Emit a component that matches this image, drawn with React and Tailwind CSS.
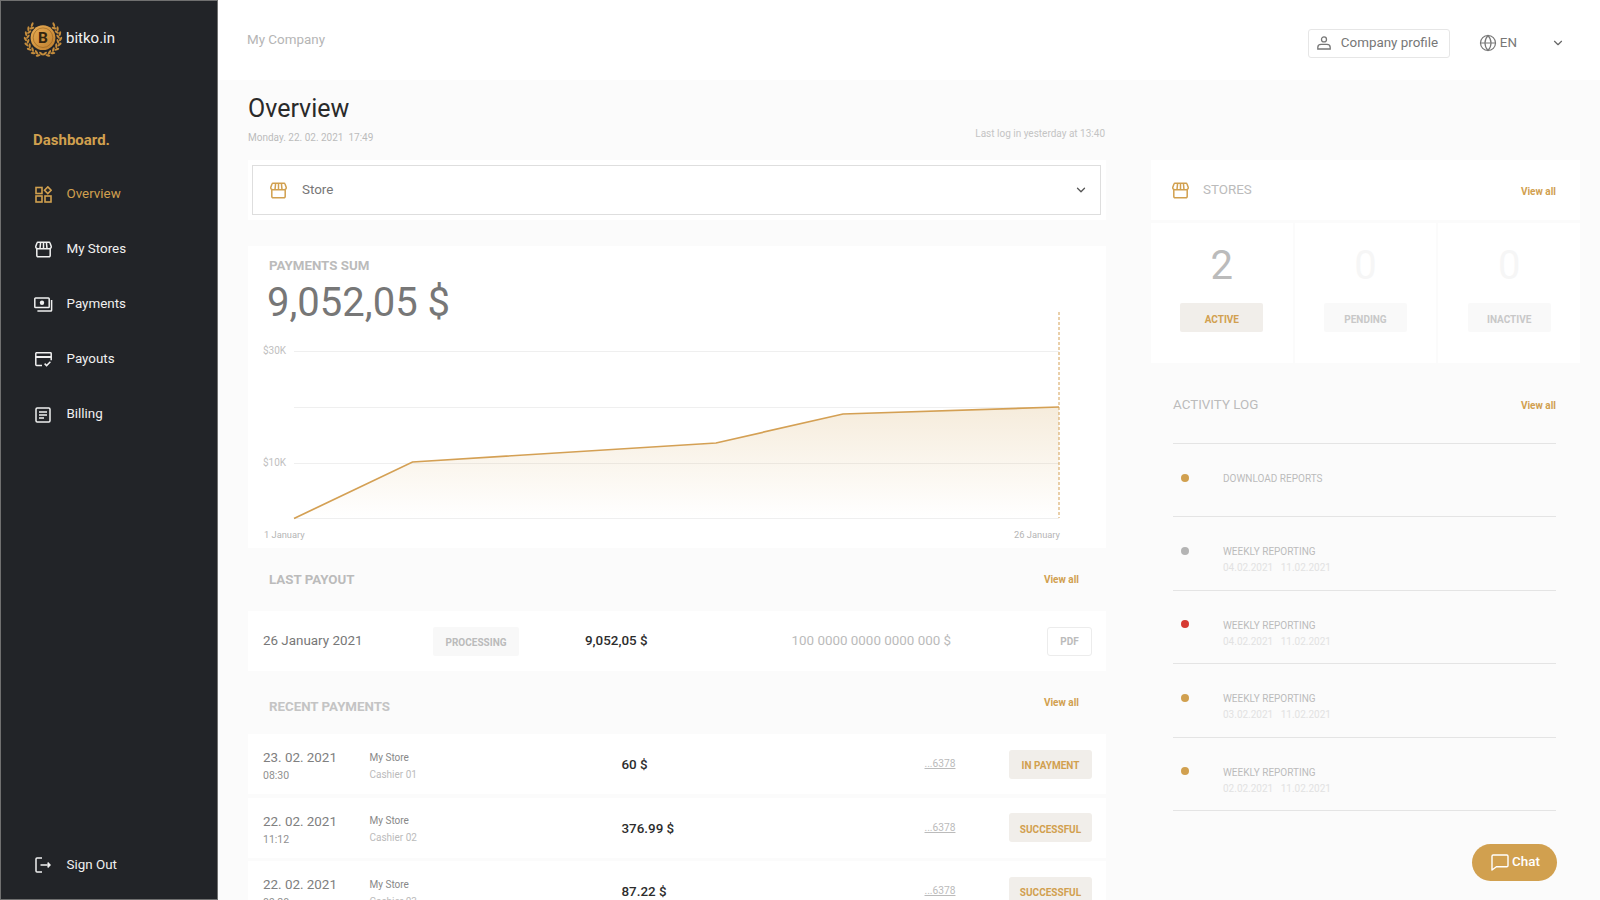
import React from 'react';
import { ChevronDown, Globe } from 'lucide-react';

const StoreIcon = ({ className }) => (
  <svg viewBox="0 0 17 17" fill="none" stroke="currentColor" strokeWidth="1.5" strokeLinejoin="round" className={className}>
    <path d="M3 1.2h11a1 1 0 0 1 1 .7l1.2 3.4a2 2 0 0 1-2 2.4H2.8a2 2 0 0 1-2-2.4L2 1.9a1 1 0 0 1 1-.7Z" />
    <path d="M5.6 1.4 5 7.6M8.5 1.4v6.2M11.4 1.4l.6 6.2" />
    <path d="M1.8 7.7v6.9a1.2 1.2 0 0 0 1.2 1.2h11a1.2 1.2 0 0 0 1.2-1.2V7.7" />
  </svg>
);

const OverviewIcon = ({ className }) => (
  <svg viewBox="0 0 17 17" fill="none" stroke="currentColor" strokeWidth="1.6" className={className}>
    <rect x="1" y="1.5" width="6" height="6" />
    <rect x="1" y="10" width="6" height="6" />
    <rect x="10" y="10" width="6" height="6" />
    <path d="m12.8.9 3.3 3.3-3.3 3.3-3.3-3.3Z" />
  </svg>
);

const PaymentsIcon = ({ className }) => (
  <svg viewBox="0 0 19 15" fill="none" stroke="currentColor" strokeWidth="1.5" className={className}>
    <rect x="0.8" y="1" width="14.4" height="9.6" rx="0.8" />
    <circle cx="8" cy="5.8" r="2.2" fill="currentColor" stroke="none" />
    <path d="M17.6 3v10.2a.8.8 0 0 1-.8.8H3.4" />
  </svg>
);

const PayoutsIcon = ({ className }) => (
  <svg viewBox="0 0 17 15" fill="none" stroke="currentColor" strokeWidth="1.5" className={className}>
    <path d="M7 13.4H1.6a.8.8 0 0 1-.8-.8V1.5a.8.8 0 0 1 .8-.8h13.8a.8.8 0 0 1 .8.8v6.8" />
    <path d="M.8 5h15.4" strokeWidth="2" />
    <path d="m9.6 11.6 2 2 3.8-3.8" />
  </svg>
);

const BillingIcon = ({ className }) => (
  <svg viewBox="0 0 16 16" fill="none" stroke="currentColor" strokeWidth="1.5" className={className}>
    <rect x="1" y="1" width="14" height="14" rx="1.2" />
    <path d="M4 5h8M4 8h8M4 11h5" />
  </svg>
);

const SignOutIcon = ({ className }) => (
  <svg viewBox="0 0 16 16" fill="none" stroke="currentColor" strokeWidth="1.5" className={className}>
    <path d="M7 1H2a1 1 0 0 0-1 1v12a1 1 0 0 0 1 1h5" />
    <path d="M5.5 8h9.5M12.6 5.6 15 8l-2.4 2.4" />
  </svg>
);

const UserIcon = ({ className }) => (
  <svg viewBox="0 0 14 14" fill="none" stroke="currentColor" strokeWidth="1.3" className={className}>
    <circle cx="7" cy="3.4" r="2.5" />
    <path d="M.8 13v-1.6c0-1.8 1.6-3 3.2-3h6c1.6 0 3.2 1.2 3.2 3V13Z" />
  </svg>
);

const ChatIcon = ({ className }) => (
  <svg viewBox="0 0 18 17" fill="none" stroke="currentColor" strokeWidth="1.4" strokeLinejoin="round" className={className}>
    <path d="M2.2 1h13.6a1.2 1.2 0 0 1 1.2 1.2v9.4a1.2 1.2 0 0 1-1.2 1.2H5.4L1 16V2.2A1.2 1.2 0 0 1 2.2 1Z" />
  </svg>
);

// laurel leaves on the left half of the wreath, mirrored for the right half
const outerLeaves = [128, 146, 164, 182, 200, 218, 236, 254];
const innerLeaves = [137, 155, 173, 191, 209, 227, 245, 263];

const Leaf = ({ a, r, tilt }) => {
  const rad = (a * Math.PI) / 180;
  const x = 20 + r * Math.cos(rad);
  const y = 17.5 - r * Math.sin(rad);
  const deg = 180 - a + tilt;
  return (
    <g fill="#c48c3c">
      <ellipse cx={x} cy={y} rx="1.1" ry="2.5" transform={`rotate(${deg} ${x} ${y})`} />
      <ellipse cx={40 - x} cy={y} rx="1.1" ry="2.5" transform={`rotate(${-deg} ${40 - x} ${y})`} />
    </g>
  );
};

const Logo = () => (
  <svg viewBox="0 0 40 36" className="w-[40px] h-[36px]">
    <defs>
      <linearGradient id="gold" x1="0" y1="0" x2="1" y2="1">
        <stop offset="0%" stopColor="#e9ad56" />
        <stop offset="100%" stopColor="#bd7e2c" />
      </linearGradient>
    </defs>
    {outerLeaves.map((a) => (
      <Leaf key={a} a={a} r={17.6} tilt={-30} />
    ))}
    {innerLeaves.map((a) => (
      <Leaf key={a} a={a} r={15.2} tilt={30} />
    ))}
    <circle cx="20" cy="16.7" r="12.4" fill="url(#gold)" />
    <circle cx="20" cy="16.7" r="9.8" fill="none" stroke="#8f5c1c" strokeWidth="0.6" />
    <text x="20" y="22.2" textAnchor="middle" fontSize="15.5" fontWeight="700" fill="#33240f" fontFamily="Roboto, sans-serif">B</text>
  </svg>
);

const navItems = [
  { label: 'Overview', Icon: OverviewIcon, iconClass: 'w-[17px] h-[17px]', active: true },
  { label: 'My Stores', Icon: StoreIcon, iconClass: 'w-[17px] h-[17px]' },
  { label: 'Payments', Icon: PaymentsIcon, iconClass: 'w-[19px] h-[15px]' },
  { label: 'Payouts', Icon: PayoutsIcon, iconClass: 'w-[17px] h-[15px]' },
  { label: 'Billing', Icon: BillingIcon, iconClass: 'w-[16px] h-[16px]' },
];

const Sidebar = () => (
  <aside className="w-[218px] shrink-0 h-full bg-[#222428] border border-[#707070] flex flex-col">
    <div className="flex items-center pl-[22px] pt-[20px] h-[56px]">
      <Logo />
      <span className="ml-[3px] text-[15px] text-[#f2f2f2] leading-none -mt-[1px]">bitko.in</span>
    </div>
    <div className="mt-[73px] pl-[32px] text-[15px] font-bold text-[#d1a04f] leading-5">Dashboard.</div>
    <nav className="mt-[17px]">
      {navItems.map(({ label, Icon, iconClass, active }) => (
        <div key={label} className={`h-[55px] flex items-center text-[13.4px] ${active ? 'text-[#d1a04f]' : 'text-[#f0f0f0]'}`}>
          <span className="w-[65.5px] flex justify-center pl-[19px]">
            <Icon className={iconClass} />
          </span>
          <span>{label}</span>
        </div>
      ))}
    </nav>
    <div className="mt-auto mb-[16px] h-[36px] flex items-center text-[13.4px] text-[#f0f0f0]">
      <span className="w-[65.5px] flex justify-center pl-[19px]">
        <SignOutIcon className="w-[16px] h-[16px]" />
      </span>
      Sign Out
    </div>
  </aside>
);

const Header = () => (
  <header className="h-[80px] bg-white flex items-center pl-[29px] shrink-0">
    <span className="text-[13.4px] text-[#b5b5b5] mt-[1px]">My Company</span>
    <div className="ml-auto flex items-center mt-[6px]">
      <div className="w-[142px] h-[29px] border border-[#e6e6e6] rounded-[3px] flex items-center pl-[8px] text-[13.4px] text-[#777]">
        <UserIcon className="w-[14px] h-[14px]" />
        <span className="ml-[10px]">Company profile</span>
      </div>
      <Globe className="w-[18px] h-[18px] ml-[29px] text-[#777]" strokeWidth={1.6} />
      <span className="ml-[3px] text-[13.4px] text-[#777]">EN</span>
      <ChevronDown className="w-[14px] h-[14px] ml-[34px] mr-[35px] text-[#666]" strokeWidth={2} />
    </div>
  </header>
);

const ViewAll = () => <span className="block text-[10px] font-bold text-[#d1a04f] leading-4">View all</span>;

const Chart = () => (
  <svg width="858" height="236" className="block" fontFamily="Roboto, sans-serif">
    <defs>
      <linearGradient id="area" x1="0" y1="0" x2="0" y2="1">
        <stop offset="0%" stopColor="#d1a04f" stopOpacity="0.2" />
        <stop offset="100%" stopColor="#d1a04f" stopOpacity="0" />
      </linearGradient>
    </defs>
    <path d="M46 39.5H811M46 95.5H811M46 151.5H811M46 206.5H811" stroke="#efefef" strokeWidth="1" />
    <path d="M46 206.5 164.5 150 468 131 595 102 811 95V206.5Z" fill="url(#area)" />
    <path d="M46 206.5 164.5 150 468 131 595 102 811 95" fill="none" stroke="#d4a054" strokeWidth="1.7" />
    <path d="M811 0V206" stroke="#d4a054" strokeWidth="1" strokeDasharray="3 2" />
    <text x="15" y="42" fontSize="10" fill="#c0c0c0">$30K</text>
    <text x="15" y="154" fontSize="10" fill="#c0c0c0">$10K</text>
    <text x="16" y="226" fontSize="9.3" fill="#b5b5b5">1 January</text>
    <text x="812" y="226" fontSize="9.3" fill="#b5b5b5" textAnchor="end">26 January</text>
  </svg>
);

const payments = [
  { date: '23. 02. 2021', time: '08:30', cashier: 'Cashier 01', amount: '60 $', status: 'IN PAYMENT' },
  { date: '22. 02. 2021', time: '11:12', cashier: 'Cashier 02', amount: '376.99 $', status: 'SUCCESSFUL' },
  { date: '22. 02. 2021', time: '09:20', cashier: 'Cashier 03', amount: '87.22 $', status: 'SUCCESSFUL' },
];

const PaymentRow = ({ date, time, cashier, amount, status }) => (
  <div className="h-[60px] shrink-0 bg-white flex items-center pl-[15px] mb-[3.5px]">
    <div className="w-[106.5px] pt-[4px]">
      <div className="text-[13.4px] leading-[17px] text-[#808080]">{date}</div>
      <div className="text-[10.5px] leading-[14px] mt-[3px] text-[#909090]">{time}</div>
    </div>
    <div className="w-[252px] text-[10px] text-[#888] pt-[4px]">
      <div className="leading-[14px]">My Store</div>
      <div className="leading-[14px] mt-[3px] text-[#bbb]">{cashier}</div>
    </div>
    <div className="w-[303px] text-[13.4px] font-medium text-[#2c2c2c] pt-[3px]">{amount}</div>
    <div className="w-[84.5px] text-[10.2px] text-[#bbb] underline">...6378</div>
    <div className="w-[83px] h-[29px] bg-[#f1eeea] rounded-[3px] flex items-center justify-center text-[10px] font-bold text-[#d1a04f] pt-[3px]">{status}</div>
  </div>
);

const MainColumn = () => (
  <div className="w-[858px] shrink-0">
    <div className="flex items-end justify-between h-[80px] pb-[20px] pr-[1px]">
      <div>
        <h1 className="text-[25px] leading-[30px] text-[#2a2a2a] -mt-[2px]">Overview</h1>
        <div className="text-[10px] leading-[14px] mt-[7px] -mb-[5px] text-[#bbb] whitespace-pre">Monday. 22. 02. 2021  17:49</div>
      </div>
      <div className="text-[10px] leading-[14px] text-[#c4c4c4] -mb-[1px]">Last log in yesterday at 13:40</div>
    </div>
    <div className="h-[60px] bg-white pl-[4px] pr-[5px] py-[5px]">
      <div className="h-[50px] border border-[#dedede] flex items-center pl-[17px] pr-[12px] text-[13.4px] text-[#777]">
        <StoreIcon className="w-[17px] h-[17px] text-[#d1a04f]" />
        <span className="ml-[15px]">Store</span>
        <ChevronDown className="w-[14px] h-[14px] ml-auto text-[#555]" strokeWidth={2.2} />
      </div>
    </div>
    <section className="mt-[26px] h-[302px] bg-white">
      <div className="h-[66px] pl-[21px] pt-[11px]">
        <div className="text-[13.3px] font-bold leading-[18px] text-[#bbb]">PAYMENTS SUM</div>
        <div className="text-[40px] leading-[46px] mt-[5px] -ml-[2px] text-[#777]">9,052,05 $</div>
      </div>
      <Chart />
    </section>
    <div className="h-[63px] flex justify-between items-center pl-[21px] pr-[27px]">
      <span className="text-[13.3px] font-bold text-[#bbb]">LAST PAYOUT</span>
      <ViewAll />
    </div>
    <div className="h-[60px] bg-white flex items-center pl-[15px] pr-[14px]">
      <div className="w-[170px] text-[13.4px] text-[#777]">26 January 2021</div>
      <div className="w-[86px] h-[29px] bg-[#f8f8f8] rounded-[2px] flex items-center justify-center text-[10px] font-bold text-[#bbb] pt-[2px]">PROCESSING</div>
      <div className="ml-[66px] w-[206.5px] text-[13.4px] font-medium text-[#2c2c2c]">9,052,05 $</div>
      <div className="text-[13.4px] text-[#bbb]">100 0000 0000 0000 000 $</div>
      <div className="ml-auto w-[45px] h-[29px] border border-[#ececec] rounded-[3px] flex items-center justify-center text-[10px] font-bold text-[#bbb]">PDF</div>
    </div>
    <div className="h-[63px] flex justify-between items-start pt-[26px] pl-[21px] pr-[27px]">
      <span className="text-[13.3px] font-bold leading-[20px] text-[#c4c4c4]">RECENT PAYMENTS</span>
      <span className="-mt-[2px]"><ViewAll /></span>
    </div>
    {payments.map((p) => (
      <PaymentRow key={p.cashier} {...p} />
    ))}
  </div>
);

const stats = [
  { value: '2', label: 'ACTIVE', on: true },
  { value: '0', label: 'PENDING' },
  { value: '0', label: 'INACTIVE' },
];

const logs = [
  { dot: 'bg-[#d1a04f]', title: 'DOWNLOAD REPORTS' },
  { dot: 'bg-[#b4b4b4]', title: 'WEEKLY REPORTING', from: '04.02.2021', to: '11.02.2021' },
  { dot: 'bg-[#d63a32]', title: 'WEEKLY REPORTING', from: '04.02.2021', to: '11.02.2021' },
  { dot: 'bg-[#d1a04f]', title: 'WEEKLY REPORTING', from: '03.02.2021', to: '11.02.2021' },
  { dot: 'bg-[#d1a04f]', title: 'WEEKLY REPORTING', from: '02.02.2021', to: '11.02.2021' },
];

const RightColumn = () => (
  <div className="w-[429px] shrink-0 ml-[45px] pt-[80px]">
    <div className="h-[60px] bg-white flex items-center pl-[21px] pr-[24px]">
      <StoreIcon className="w-[17px] h-[17px] text-[#d1a04f]" />
      <span className="ml-[14px] text-[13.4px] text-[#bbb]">STORES</span>
      <span className="ml-auto mt-[3px]"><ViewAll /></span>
    </div>
    <div className="mt-[3px] h-[140px] grid grid-cols-3 gap-[2px]">
      {stats.map((s) => (
        <div key={s.label} className="bg-white flex flex-col items-center">
          <div className={`mt-[20px] h-[46px] text-[40px] leading-[46px] ${s.on ? 'text-[#bbb]' : 'text-[#f6f6f6]'}`}>{s.value}</div>
          <div className={`mt-[14px] w-[83px] h-[29px] rounded-[2px] flex items-center justify-center text-[10px] font-bold pt-[3px] ${s.on ? 'bg-[#f1eeea] text-[#d1a04f]' : 'bg-[#f9f9f9] text-[#c8c8c8]'}`}>{s.label}</div>
        </div>
      ))}
    </div>
    <div className="ml-[22px] mr-[24px]">
      <div className="h-[81px] border-b border-[#e4e4e4] flex justify-between items-start pt-[33px]">
        <span className="text-[13.4px] leading-[18px] text-[#bbb]">ACTIVITY LOG</span>
        <span className="mt-[2px]"><ViewAll /></span>
      </div>
      {logs.map((l, i) => (
        <div key={i} className="h-[73.4px] border-b border-[#e4e4e4] flex items-start pt-[28px]">
          <span className={`w-[8px] h-[8px] rounded-full mt-[1.5px] ml-[8px] ${l.dot}`} />
          <div className="ml-[34px]">
            <div className="text-[10px] leading-[14px] text-[#bbb]">{l.title}</div>
            {l.from && (
              <div className="text-[10px] leading-[14px] mt-[2px] text-[#e2e2e2] whitespace-pre">{`${l.from}   ${l.to}`}</div>
            )}
          </div>
        </div>
      ))}
    </div>
  </div>
);

const ChatButton = () => (
  <button className="absolute left-[1472px] top-[844px] w-[85px] h-[37px] rounded-full bg-[#d1a04f] text-white text-[13.4px] font-medium flex items-center pl-[19px]">
    <ChatIcon className="w-[18px] h-[17px]" />
    <span className="ml-[3px]">Chat</span>
  </button>
);

export default function App() {
  return (
    <div className="relative w-[1600px] h-[900px] overflow-hidden flex bg-[#fbfbfb] font-['Roboto',sans-serif]">
      <Sidebar />
      <div className="flex-1 flex flex-col min-w-0 h-full">
        <Header />
        <div className="flex pl-[30px] min-h-0 overflow-hidden">
          <MainColumn />
          <RightColumn />
        </div>
      </div>
      <ChatButton />
    </div>
  );
}
